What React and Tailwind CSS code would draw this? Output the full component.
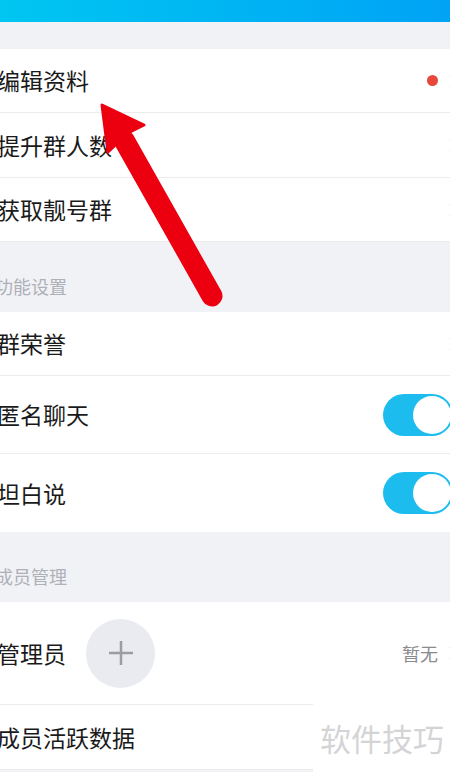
import React from 'react';

const font = { fontFamily: '"Noto Sans CJK SC", "Noto Sans", sans-serif' };

const Chevron = () => (
  <svg width="10" height="16" viewBox="0 0 10 16" className="-mr-[8px] shrink-0">
    <path d="M2 2 L8 8 L2 14" fill="none" stroke="#cfcfd3" strokeWidth="2" />
  </svg>
);

const Toggle = () => (
  <div className="w-[70px] h-[42px] rounded-full bg-[#1cbcef] flex items-center justify-end pr-[2px] -mr-[3px] shrink-0">
    <div className="w-[38px] h-[38px] rounded-full bg-white"></div>
  </div>
);

const Row = ({ label, h, right, children }) => (
  <div className={`${h} bg-white border-b border-[#ececef] flex items-center justify-between`}>
    <div className="flex items-center">
      <span className="-ml-[3px] text-[23px] text-[#1a1a1a] leading-none">{label}</span>
      {children}
    </div>
    <div className="flex items-center">{right}</div>
  </div>
);

const Section = ({ title }) => (
  <div className="h-[70px] flex items-end pb-[15px]">
    <span className="-ml-[5px] text-[18px] text-[#adb0b6] leading-[22px]">{title}</span>
  </div>
);

export default function App() {
  return (
    <div className="relative w-[450px] h-[772px] overflow-hidden bg-[#f1f2f6]" style={font}>
      <div className="h-[22px] bg-gradient-to-r from-[#00c6f1] to-[#00a3f5]"></div>
      <div className="h-[27px]"></div>

      <Row label="编辑资料" h="h-[64px]" right={<><span className="w-[11px] h-[11px] rounded-full bg-[#e8483b] mr-[10px]"></span><Chevron /></>} />
      <Row label="提升群人数" h="h-[65px]" right={<Chevron />} />
      <Row label="获取靓号群" h="h-[64px]" right={<Chevron />} />

      <Section title="功能设置" />
      <Row label="群荣誉" h="h-[64px]" right={<Chevron />} />
      <Row label="匿名聊天" h="h-[78px]" right={<Toggle />} />
      <div className="h-[78px] bg-white flex items-center justify-between">
        <span className="-ml-[3px] text-[23px] text-[#1a1a1a] leading-none">坦白说</span>
        <Toggle />
      </div>

      <Section title="成员管理" />
      <Row
        label="管理员"
        h="h-[103px]"
        right={<><span className="text-[18px] text-[#8a8a8f] mr-[10px]">暂无</span><Chevron /></>}
      >
        <div className="ml-[20px] w-[69px] h-[69px] rounded-full bg-[#e9ebf1] flex items-center justify-center">
          <svg width="26" height="26" viewBox="0 0 26 26">
            <path d="M13 1 V25 M1 13 H25" stroke="#9b9da3" strokeWidth="2.5" />
          </svg>
        </div>
      </Row>
      <div className="h-[65px] bg-white border-b border-[#ececef] flex items-center justify-between">
        <span className="-ml-[3px] text-[23px] text-[#1a1a1a] leading-none">成员活跃数据</span>
        <div className="self-stretch -mt-[2px] -mb-[3px] w-[137px] bg-white flex items-center pl-[7px]">
          <span className="text-[31px] text-[#d4d4d6] leading-none">软件技巧</span>
        </div>
      </div>

      <svg className="absolute left-0 top-0 pointer-events-none" width="450" height="772">
        <line x1="124" y1="140" x2="212" y2="296" stroke="#ec0010" strokeWidth="21" strokeLinecap="round" />
        <polygon points="102,105 144,125 128,133 108,152" fill="#ec0010" strokeLinejoin="round" stroke="#ec0010" strokeWidth="3" />
      </svg>
    </div>
  );
}
